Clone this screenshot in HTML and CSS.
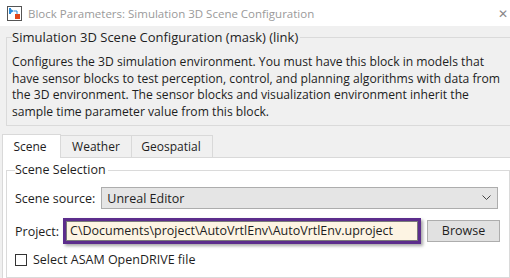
FILE: index.html
```html
<!DOCTYPE html>
<html lang="en">
<head>
    <meta charset="UTF-8">
    <title>Block Parameters: Simulation 3D Scene Configuration</title>
    <link rel="stylesheet" href="styles.css">
</head>
<body>
    <div class="titlebar">
        <svg class="app-icon" width="15" height="15" viewBox="0 0 15 15">
            <rect x="0.5" y="0.5" width="14" height="14" fill="#fff" stroke="#555"/>
            <polygon points="2,2 2,8 7,5" fill="#2b8bd8"/>
            <rect x="2" y="2" width="2" height="6" fill="#2b8bd8"/>
            <polyline points="7,5 10,5 10,8" fill="none" stroke="#2b8bd8" stroke-width="1"/>
            <rect x="8" y="8" width="5" height="5" fill="#e2461a"/>
        </svg>
        <span class="title">Block Parameters: Simulation 3D Scene Configuration</span>
        <span class="close">&#x2715;</span>
    </div>

    <div class="dialog">
        <fieldset class="mask">
            <legend>Simulation 3D Scene Configuration (mask) (link)</legend>
            <p class="description">Configures the 3D simulation environment. You must have this block in models that have sensor blocks to test perception, control, and planning algorithms with data from the 3D environment. The sensor blocks and visualization environment inherit the sample time parameter value from this block.</p>
        </fieldset>

        <div class="tabs">
            <div class="tab active">Scene</div>
            <div class="tab weather">Weather</div>
            <div class="tab geo">Geospatial</div>
        </div>

        <div class="tab-panel">
            <fieldset class="scene-selection">
                <legend>Scene Selection</legend>
                <div class="row">
                    <label>Scene source:</label>
                    <div class="dropdown">
                        <span>Unreal Editor</span>
                        <svg width="9" height="6" viewBox="0 0 9 6"><polyline points="0.5,0.5 4.5,4.5 8.5,0.5" fill="none" stroke="#444" stroke-width="1"/></svg>
                    </div>
                </div>
                <div class="row project-row">
                    <label>Project:</label>
                    <div class="highlight">
                        <div class="path-field">C\Documents\project\AutoVrtlEnv\AutoVrtlEnv.uproject</div>
                    </div>
                    <div class="button">Browse</div>
                </div>
                <div class="row check-row">
                    <span class="checkbox"></span>
                    <label>Select ASAM OpenDRIVE file</label>
                </div>
            </fieldset>
        </div>
    </div>
</body>
</html>
```

FILE: styles.css
```css
* {
    box-sizing: border-box;
}
body {
    margin: 0;
    width: 510px;
    height: 278px;
    overflow: hidden;
    font-family: 'Open Sans', sans-serif;
    font-size: 12.5px;
    color: #1e1e1e;
    background-color: #f0f0f0;
}
.titlebar {
    height: 26px;
    background-color: #fff;
    display: flex;
    align-items: center;
    padding-left: 7px;
}
.app-icon {
    margin-right: 6px;
}
.title {
    color: #9a9a9a;
    font-size: 11.5px;
    flex: 1;
}
.close {
    color: #888;
    font-size: 12px;
    margin-right: 2px;
}
.dialog {
    padding-top: 3px;
}
.mask {
    margin: 0 0 0 6px;
    padding: 0 0 5px 5px;
    border: 1px solid #dadada;
    border-right: none;
}
.mask legend {
    padding: 0 2px 0 0;
    line-height: 16px;
    font-size: 13px;
}
.description {
    margin: 9px 0 0 0;
    line-height: 16.5px;
    font-size: 12.15px;
}
.tabs {
    display: flex;
    margin: 7px 0 0 2px;
    align-items: flex-end;
    height: 24px;
    font-size: 12px;
}
.tab {
    width: 71px;
    height: 22px;
    line-height: 21px;
    text-align: center;
    border: 1px solid #d9d9d9;
    border-bottom: none;
    border-left: none;
    background-color: #f0f0f0;
}
.tab.geo {
    width: 81px;
    padding-right: 2px;
}
.tab.active {
    width: 59px;
    height: 24px;
    line-height: 24px;
    padding-right: 3px;
    border-left: 1px solid #d9d9d9;
    background-color: #fff;
    margin-bottom: -1px;
    position: relative;
}
.tab-panel {
    margin-left: 2px;
    height: 130px;
    background-color: #fff;
    border-top: 1px solid #d9d9d9;
    border-left: 1px solid #d9d9d9;
    padding-top: 4px;
}
.scene-selection {
    margin: 0 0 0 3px;
    padding: 9px 11px 6px 8px;
    border: 1px solid #dadada;
    height: 116px;
}
.scene-selection legend {
    padding: 0 2px 0 0;
    line-height: 16px;
}
.row {
    display: flex;
    align-items: center;
    gap: 6px;
}
.dropdown {
    flex: 1;
    height: 22px;
    display: flex;
    align-items: center;
    justify-content: space-between;
    padding: 0 6px 0 5px;
    background-color: #e5e5e5;
    border: 1px solid #adadad;
}
.project-row {
    margin-top: 9px;
    gap: 4px;
}
.highlight {
    flex: 1;
    border: 3px solid #5c2d8c;
    box-shadow: 2px 2px 3px rgba(0, 0, 0, 0.35);
}
.path-field {
    height: 20px;
    line-height: 18px;
    padding-left: 3px;
    border: 1px solid #7a7a7a;
    background-color: #fdf4e3;
}
.button {
    width: 73px;
    height: 22px;
    line-height: 20px;
    margin-left: 2px;
    margin-right: -2px;
    text-align: center;
    background-color: #e1e1e1;
    border: 1px solid #adadad;
}
.check-row {
    margin-top: 7px;
}
.checkbox {
    width: 12px;
    height: 12px;
    border: 1px solid #333;
    background-color: #fff;
}
```
